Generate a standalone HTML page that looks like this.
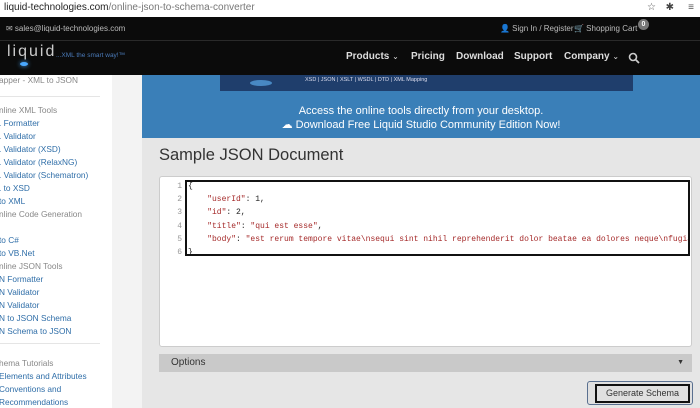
<!DOCTYPE html>
<html><head><meta charset="utf-8"><style>
*{margin:0;padding:0;box-sizing:border-box}
body{width:700px;height:408px;overflow:hidden;position:relative;background:#fff;font-family:"Liberation Sans",sans-serif;}
.abs{position:absolute}
.url{left:0;top:0;width:700px;height:17px;background:#fff;font-size:10px;line-height:16px;padding-left:4px;color:#777}
.url b{color:#222;font-weight:normal}
.hdr{left:0;top:17px;width:700px;height:58px;background:#0b0b0b}
.top{left:0;top:17px;width:700px;height:24px;border-bottom:1px solid #2a2a2a;color:#bbb;font-size:8px;line-height:24px}
.nav{top:51px;color:#ddd;font-size:10px;font-weight:bold}
.side{left:0;top:75px;width:112px;height:333px;background:#fff;font-size:8.3px}
.side div{position:absolute;left:-1px;white-space:nowrap;color:#2f6ea8}
.side .g{color:#888}
.strip{left:112px;top:75px;width:30px;height:333px;background:#f3f3f3}
.ban{left:142px;top:75px;width:558px;height:63px;background:#3a7fb8}
.img{left:220px;top:75px;width:413px;height:16px;background:#1f3e6c}
.main{left:142px;top:138px;width:558px;height:270px;background:#e6e6e6}
.code{font-family:"Liberation Mono",monospace;font-size:8px;color:#a52a2a}
</style></head><body>
<div class="abs url"><b>liquid-technologies.com</b>/online-json-to-schema-converter</div>
<div class="abs" style="right:44px;top:2px;font-size:10px;color:#555">☆</div>
<div class="abs" style="right:26px;top:2px;font-size:10px;color:#444">✱</div>
<div class="abs" style="right:6px;top:2px;font-size:10px;color:#555">≡</div>
<div class="abs hdr"></div>
<div class="abs top"><span style="margin-left:6px">✉ sales@liquid-technologies.com</span>
<span class="abs" style="left:500px">👤 Sign In / Register</span><span class="abs" style="left:574px">🛒 Shopping Cart</span></div>
<div class="abs" style="left:638px;top:19px;width:11px;height:11px;border-radius:6px;background:#777;color:#fff;font-size:7px;text-align:center;line-height:11px;font-weight:bold">0</div>
<div class="abs" style="left:7px;top:43px;color:#ccc;font-size:16px;letter-spacing:2px">liquid</div>
<div class="abs" style="left:20px;top:62px;width:8px;height:4px;border-radius:50%;background:#4aa8ff;box-shadow:0 0 5px #4aa8ff"></div>
<div class="abs" style="left:56px;top:52px;color:#4a7ab8;font-size:6.5px">...XML the smart way!™</div>
<div class="abs nav" style="left:346px">Products <span style="font-weight:normal;font-size:8px">⌄</span></div>
<div class="abs nav" style="left:411px">Pricing</div>
<div class="abs nav" style="left:456px">Download</div>
<div class="abs nav" style="left:514px">Support</div>
<div class="abs nav" style="left:564px">Company <span style="font-weight:normal;font-size:8px">⌄</span></div>
<svg class="abs" style="left:628px;top:52px" width="12" height="12" viewBox="0 0 12 12"><circle cx="5" cy="5" r="3.5" fill="none" stroke="#ccc" stroke-width="1.6"/><line x1="7.5" y1="7.5" x2="11" y2="11" stroke="#ccc" stroke-width="1.8"/></svg>
<div class="abs side">
<div class="g" style="top:0">apper - XML to JSON</div>
<div style="top:21px;left:0;width:100px;height:1px;background:#e5e5e5"></div>
<div class="g" style="top:30px">nline XML Tools</div>
<div style="top:43px">. Formatter</div>
<div style="top:56px">. Validator</div>
<div style="top:69px">. Validator (XSD)</div>
<div style="top:82px">. Validator (RelaxNG)</div>
<div style="top:95px">. Validator (Schematron)</div>
<div style="top:108px">. to XSD</div>
<div style="top:121px">to XML</div>
<div class="g" style="top:134px">nline Code Generation</div>
<div style="top:160px">to C#</div>
<div style="top:173px">to VB.Net</div>
<div class="g" style="top:186px">nline JSON Tools</div>
<div style="top:199px">N Formatter</div>
<div style="top:212px">N Validator</div>
<div style="top:225px">N Validator</div>
<div style="top:238px">N to JSON Schema</div>
<div style="top:251px">N Schema to JSON</div>
<div style="top:268px;left:0;width:100px;height:1px;background:#e5e5e5"></div>
<div class="g" style="top:283px">hema Tutorials</div>
<div style="top:296px">Elements and Attributes</div>
<div style="top:309px">Conventions and</div>
<div style="top:322px">Recommendations</div>
</div>
<div class="abs strip"></div>
<div class="abs ban"></div>
<div class="abs img"></div>
<div class="abs" style="left:250px;top:80px;width:22px;height:6px;border-radius:50%;background:#5aa8e8;opacity:.7"></div>
<div class="abs" style="left:305px;top:77px;color:#dde;font-size:5.5px">XSD | JSON | XSLT | WSDL | DTD | XML Mapping</div>
<div class="abs" style="left:142px;top:104px;width:558px;text-align:center;color:#fff;font-size:11px;line-height:14px">Access the online tools directly from your desktop.<br>☁ Download Free Liquid Studio Community Edition Now!</div>
<div class="abs main"></div>
<div class="abs" style="left:159px;top:146px;font-size:16.5px;color:#333">Sample JSON Document</div>
<div class="abs" style="left:159px;top:176px;width:533px;height:171px;background:#fff;border:1px solid #ccc;border-radius:3px"></div>
<div class="abs code" style="left:170px;top:180px;width:12px;text-align:right;color:#999;line-height:13.2px">1<br>2<br>3<br>4<br>5<br>6</div>
<div class="abs" style="left:185px;top:180px;width:505px;height:76px;border:2px solid #111;overflow:hidden">
<div class="code" style="position:absolute;left:1px;top:-2px;line-height:13.2px;white-space:pre;color:#222">{
    <span style="color:#a52a2a">"userId"</span>: 1,
    <span style="color:#a52a2a">"id"</span>: 2,
    <span style="color:#a52a2a">"title"</span>: <span style="color:#a52a2a">"qui est esse"</span>,
    <span style="color:#a52a2a">"body"</span>: <span style="color:#a52a2a">"est rerum tempore vitae\nsequi sint nihil reprehenderit dolor beatae ea dolores neque\nfugiat</span>
}</div></div>
<div class="abs" style="left:159px;top:354px;width:533px;height:18px;background:#c9c9c9;font-size:10px;line-height:18px;padding-left:12px;color:#333">Options<span style="position:absolute;right:8px;font-size:7px">▼</span></div>
<div class="abs" style="left:587px;top:381px;width:106px;height:24px;border:1px solid #5a7090;border-radius:3px;background:#e0e0e0"></div>
<div class="abs" style="left:595px;top:384px;width:95px;height:19px;border:2px solid #111;font-size:9px;line-height:15px;text-align:center;color:#333">Generate Schema</div>
</body></html>
